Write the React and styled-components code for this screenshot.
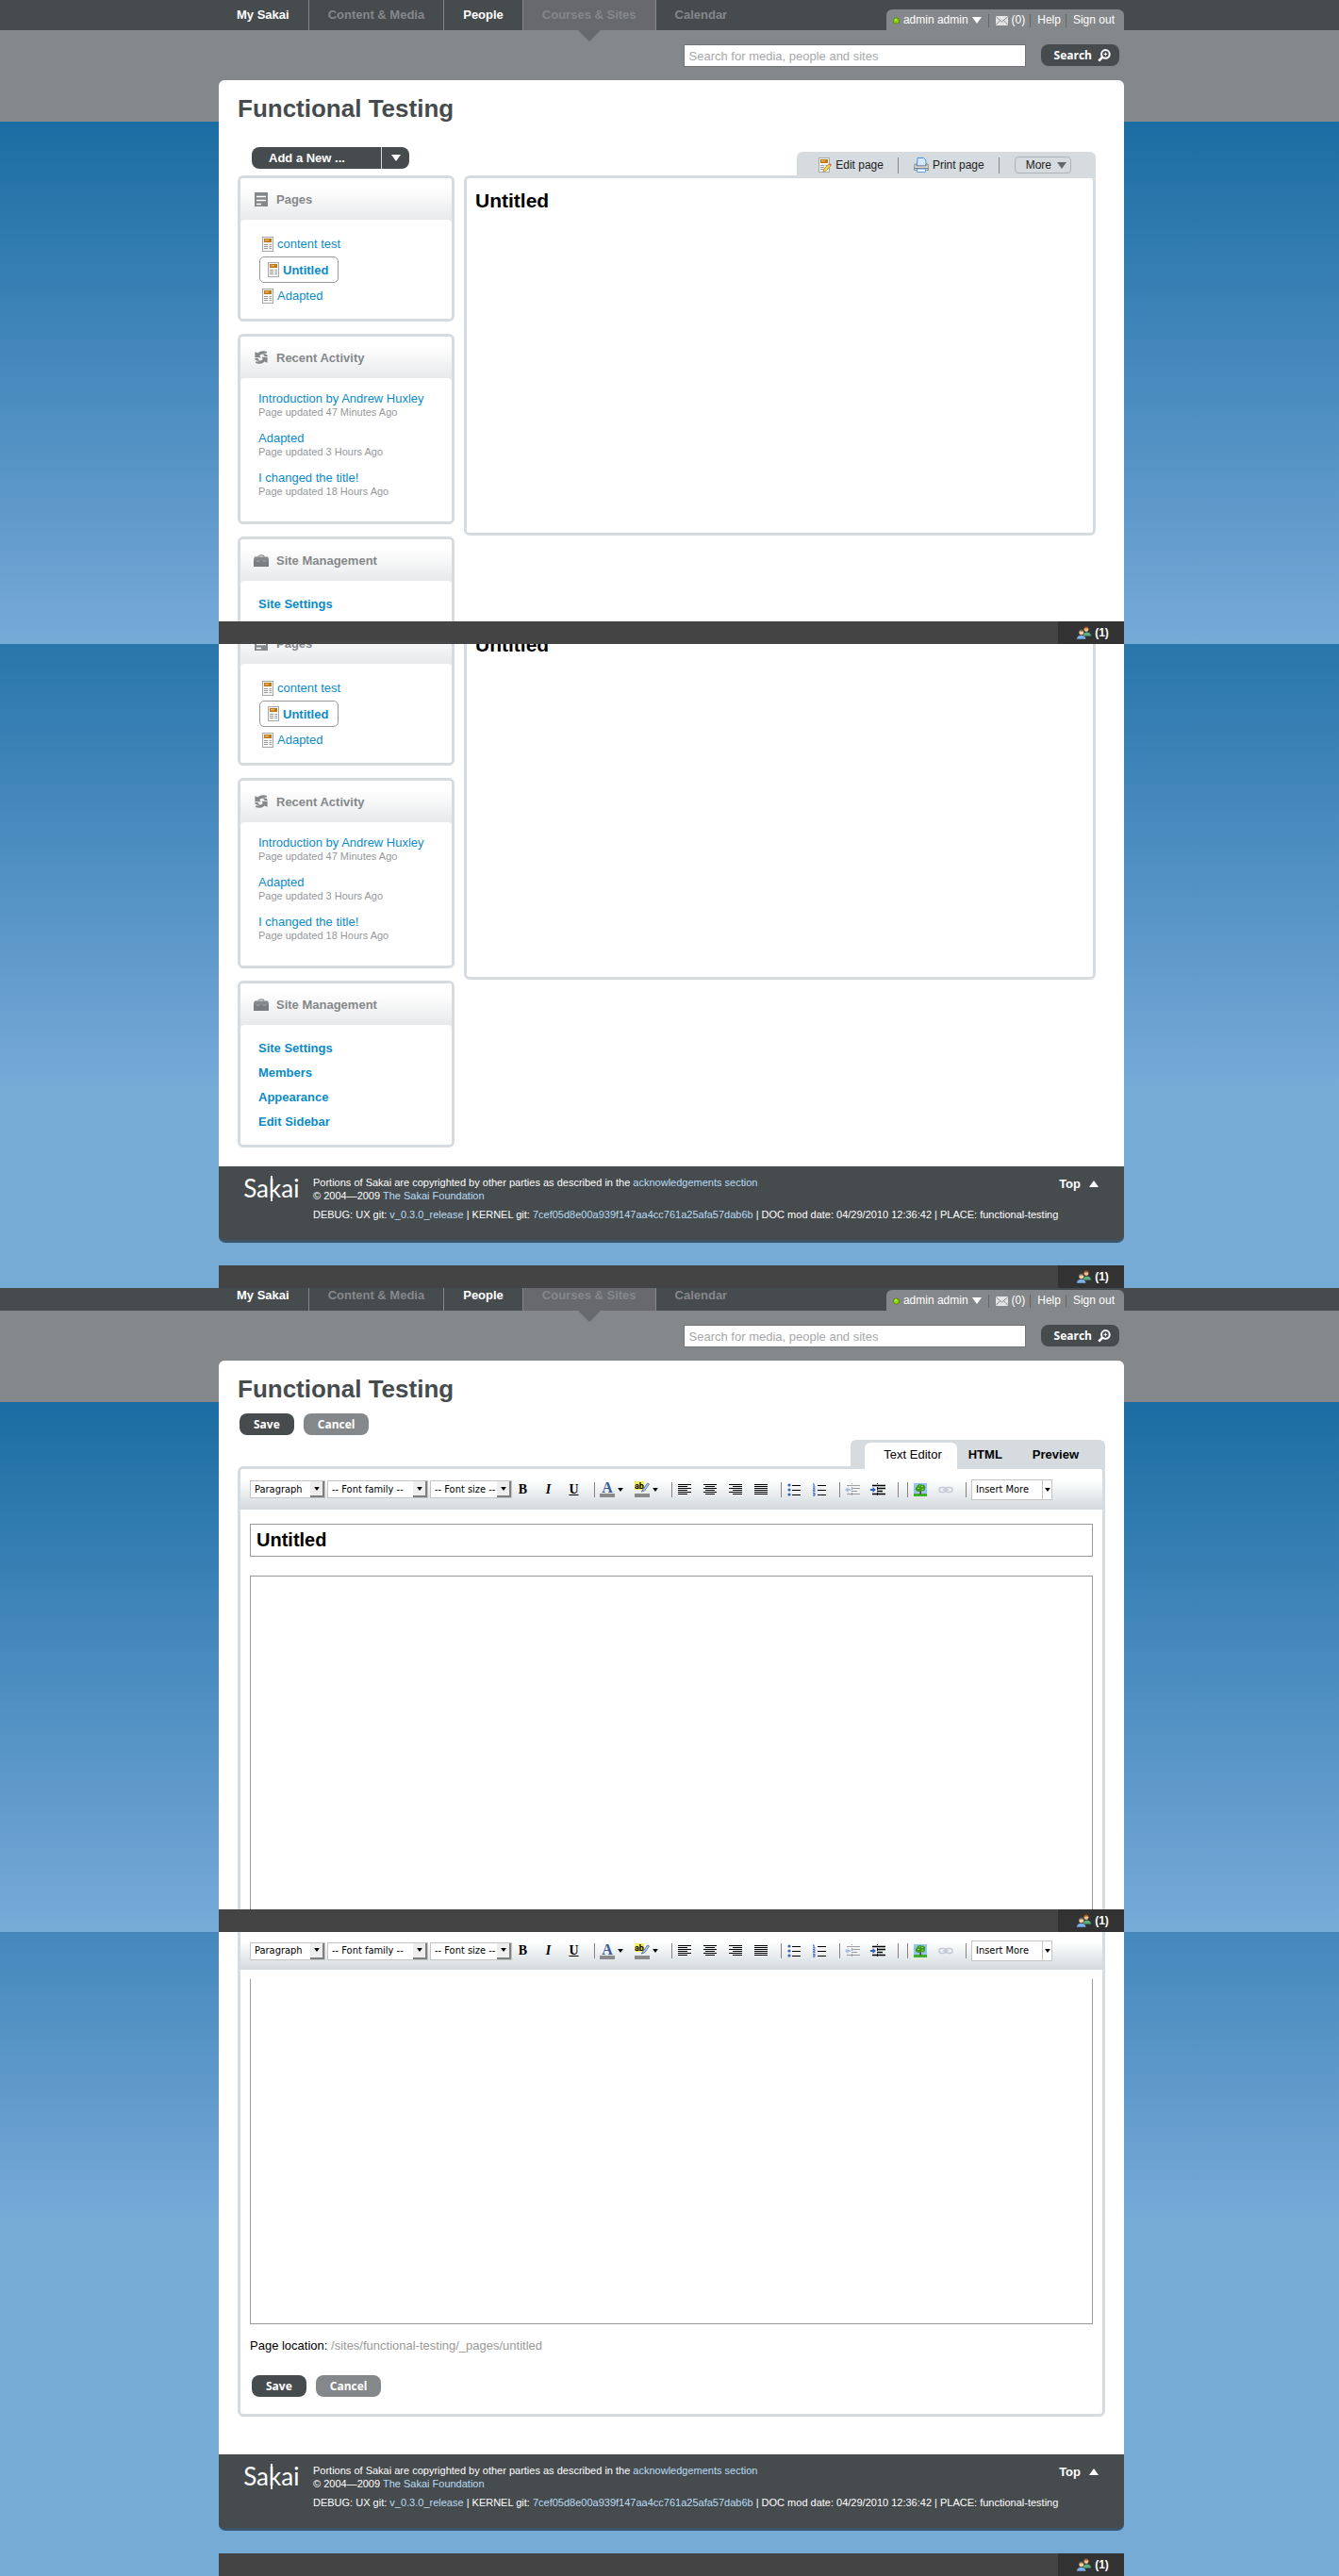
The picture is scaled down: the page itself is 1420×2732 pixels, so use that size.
import React, { useId } from "react";
import styled, { createGlobalStyle, css } from "styled-components";

const c = {
  ink: "#464b4e",
  grey: "#85888a",
  frame: "#d5dbdf",
  link: "#0b8ac6",
  muted: "#8a8c8e",
  field: "#999999",
};

const Global = createGlobalStyle`
  *, *::before, *::after { box-sizing: border-box; }
  body {
    margin: 0;
    background: #76abd6;
    font-family: "Liberation Sans", Arial, Helvetica, sans-serif;
    font-size: 13px;
    line-height: 15px;
    color: #000;
  }
  h1, h2, h3, p, ul { margin: 0; padding: 0; }
  ul { list-style: none; }
  a { text-decoration: none; color: ${c.link}; }
  button, input, select, textarea { font-family: inherit; margin: 0; border-radius: 0; }
  button { border: 0; padding: 0; background: none; cursor: pointer; }
  svg { display: block; flex: none; }
`;

/* ---------- page shell ---------- */

const Screen = styled.section`
  display: flex;
  flex-direction: column;
  min-height: 25vh;
  overflow: hidden;
  background:
    linear-gradient(${c.grey}, ${c.grey}) 0 ${(p) => -p.$scroll}px / 100% 129px no-repeat,
    linear-gradient(#1b6da3, #72a6d6 95%, #76abd6) 0 ${(p) => 129 - p.$scroll}px / 100% 554px no-repeat,
    #76abd6;
`;

const Scroller = styled.div`
  flex: 1;
  display: flex;
  flex-direction: column;
  margin-top: ${(p) => -(p.$clip || 0)}px;
`;

const Center = styled.div`
  width: 100%;
  max-width: 964px;
  margin: 0 auto;
  padding-left: 4px;
  ${(p) => p.$grow && css`
    flex: 1;
    display: flex;
    flex-direction: column;
  `}
`;

const Card = styled.main`
  flex: 1;
  display: flex;
  flex-direction: column;
  background: #fff;
  padding: ${(p) => (p.$top ? "15px 20px 0" : "0 20px")};
  border-radius: ${(p) => (p.$top ? "6px 6px 0 0" : "0")};
`;

/* ---------- header ---------- */

const NavBar = styled.header`
  background: ${c.ink};
`;

const NavRow = styled.div`
  display: flex;
  justify-content: space-between;
  align-items: flex-end;
`;

const NavList = styled.ul`
  display: flex;
`;

const NavItem = styled.li`
  position: relative;
  border-right: 1px solid ${(p) => (p.$last ? "transparent" : "#85888a")};
  background: ${(p) => (p.$current ? "#67696d" : "transparent")};
  &:first-child a { padding-left: 19px; }
  ${(p) => p.$current && css`
    &::after {
      content: "";
      position: absolute;
      top: 100%;
      left: 50%;
      margin-left: -12px;
      border: 12px solid transparent;
      border-top-color: #67696d;
      border-bottom-width: 0;
    }
  `}
`;

const NavLink = styled.a`
  display: block;
  padding: 0 20px;
  height: 32px;
  line-height: 31px;
  font-weight: bold;
  color: ${(p) => (p.$strong ? "#fff" : "#85888a")};
`;

const UserBar = styled.div`
  display: flex;
  align-items: center;
  height: 22px;
  padding: 1px 5px 0 0;
  background: ${c.grey};
  border-radius: 6px 6px 0 0;
`;

const UserItem = styled.a`
  display: flex;
  align-items: center;
  gap: 4px;
  height: 14px;
  padding: 0 5px 0 7px;
  font-size: 12px;
  color: #fff;
  border-left: 1px solid #64676a;
  &:first-child {
    border-left: 0;
    padding-right: 7px;
  }
`;

const SearchForm = styled.form`
  display: flex;
  justify-content: flex-end;
  align-items: flex-start;
  gap: 16px;
  height: 53px;
  padding: 15px 5px 0 0;
`;

const SearchField = styled.input`
  width: 363px;
  height: 24px;
  padding: 0 5px;
  border: 1px solid #717376;
  background: #fff;
  font-size: 13px;
  &::placeholder { color: #a6a8a9; opacity: 1; }
`;

const Pill = styled.button`
  display: flex;
  align-items: center;
  justify-content: center;
  gap: 6px;
  height: 23px;
  padding: ${(p) => (p.$slim ? "0 9px 0 14px" : "0 15px")};
  border-radius: 8px;
  background: ${(p) => (p.$light ? c.grey : c.ink)};
  color: #fff;
  font: bold 12px/22px "Open Sans", "Noto Sans", sans-serif;
`;

const PillRow = styled.div`
  display: flex;
  gap: 10px;
  align-self: ${(p) => (p.$upper ? "flex-start" : "auto")};
  padding: ${(p) => (p.$upper ? "11px 0 0 2px" : "0 0 0 2px")};
`;

/* ---------- site page ---------- */

const Title = styled.h1`
  font-size: 26px;
  line-height: 30px;
  color: ${c.ink};
`;

const ToolRow = styled.div`
  position: relative;
  z-index: 1;
  display: flex;
  justify-content: space-between;
  align-items: flex-end;
  height: ${(p) => (p.$tall ? 67 : 56)}px;
`;

const AddNew = styled.div`
  display: flex;
  height: 23px;
  margin: 0 0 7px 15px;
  border-radius: 8px;
  overflow: hidden;
  background: ${c.ink};
`;

const AddButton = styled.button`
  width: 138px;
  padding-left: 18px;
  text-align: left;
  color: #fff;
  font-size: 13px;
  line-height: 21px;
  font-weight: bold;
  border-right: 1px solid #d5dbdf;
`;

const AddMore = styled.button`
  display: flex;
  align-items: center;
  justify-content: center;
  width: 29px;
`;

const ActionBar = styled.div`
  display: flex;
  align-items: center;
  height: 28px;
  margin: 0 10px -3px 0;
  padding: 0 26px 0 23px;
  background: ${c.frame};
  border-radius: 6px 6px 0 0;
`;

const Action = styled.a`
  display: flex;
  align-items: center;
  gap: 4px;
  height: 17px;
  padding-right: 15px;
  margin-right: 16px;
  border-right: 1px solid ${c.grey};
  font-size: 12px;
  color: #222;
`;

const MoreButton = styled.button`
  display: flex;
  align-items: center;
  gap: 6px;
  height: 18px;
  padding: 0 4px 0 11px;
  border: 1px solid #aeb3b7;
  border-radius: 4px;
  font-size: 12px;
  line-height: 15px;
  color: #222;
`;

const Columns = styled.div`
  flex: 1;
  display: grid;
  grid-template-columns: 230px 1fr;
  gap: 10px;
  padding-right: 10px;
  padding-bottom: ${(p) => (p.$padded ? 20 : 0)}px;
`;

const Sidebar = styled.aside`
  display: flex;
  flex-direction: column;
  gap: 13px;
`;

const Panel = styled.section`
  border: 3px solid ${c.frame};
  border-radius: 6px;
  background: #fff;
  ${(p) => p.$open && css`
    flex: 1;
    border-bottom: 0;
    border-radius: 6px 6px 0 0;
  `}
`;

const PanelHead = styled.div`
  display: flex;
  align-items: center;
  gap: 8px;
  height: 48px;
  padding: 0 14px 4px;
  margin-bottom: -4px;
  border-radius: 3px 3px 0 0;
  background: linear-gradient(#fff 20%, #e8e9eb 92%);
`;

const PanelTitle = styled.h3`
  font-size: 13px;
  line-height: 15px;
  color: ${c.grey};
`;

const IconBox = styled.span`
  display: flex;
  justify-content: center;
  width: 16px;
`;

const PanelBody = styled.div`
  background: #fff;
  border-radius: 4px;
  padding: ${(p) => p.$pad};
`;

const PageLink = styled.a`
  display: flex;
  align-items: center;
  gap: 4px;
  width: fit-content;
  height: 27px;
  padding: 0 3px;
  ${(p) => p.$current && css`
    height: 28px;
    padding: 0 10px 0 8px;
    border: 1px solid #999;
    border-radius: 5px;
    font-weight: bold;
  `}
`;

const Activity = styled.li`
  & + & { margin-top: 13px; }
`;

const ActivityTime = styled.p`
  font-size: 11px;
  line-height: 14px;
  color: #95979a;
`;

const ManageLink = styled.a`
  display: block;
  line-height: 26px;
  font-weight: bold;
`;

const Content = styled.article`
  min-height: 382px;
  align-self: start;
  border: 3px solid ${c.frame};
  border-radius: 6px;
  padding: 12px 9px;
`;

const ContentTitle = styled.h2`
  font-size: 21px;
  line-height: 24px;
`;

/* ---------- editor ---------- */

const Tabs = styled.div`
  display: flex;
  align-items: flex-end;
  height: 31px;
  margin-bottom: -3px;
  padding: 0 8px 0 15px;
  background: ${c.frame};
  border-radius: 6px 6px 0 0;
`;

const Tab = styled.button`
  height: 28px;
  padding: 0 ${(p) => (p.$active ? 16 : 20)}px 4px;
  padding-left: ${(p) => (p.$active ? 20 : 12)}px;
  border-radius: 6px 6px 0 0;
  background: ${(p) => (p.$active ? "#fff" : "transparent")};
  font-size: 13px;
  line-height: 15px;
  font-weight: ${(p) => (p.$active ? "normal" : "bold")};
`;

const Editor = styled.section`
  display: flex;
  flex-direction: column;
  flex: ${(p) => (p.$part === "top" ? 1 : "none")};
  border: 3px solid ${c.frame};
  ${(p) => p.$part === "top"
    ? css`border-bottom: 0; border-radius: 6px 6px 0 0;`
    : css`border-top: 0; border-radius: 0 0 6px 6px;`}
`;

const Toolbar = styled.div`
  display: flex;
  align-items: center;
  height: ${(p) => (p.$pinned ? 40 : 43)}px;
  padding: 0 10px;
  border-radius: 3px 3px 0 0;
  background: linear-gradient(#fff 25%, #d2dadd);
`;

const Selects = styled.div`
  display: flex;
  gap: 2px;
`;

const Group = styled.div`
  display: flex;
  align-items: center;
  gap: 4px;
  height: 16px;
  margin-left: ${(p) => (p.$tight ? 8 : 10)}px;
  padding-left: ${(p) => (p.$roomy ? 5 : 1)}px;
  border-left: 1px solid #8d7f80;
  ${(p) => p.$first && css`
    margin-left: 0;
    padding-left: 0;
    border-left: 0;
  `}
`;

const Tool = styled.button`
  display: flex;
  align-items: center;
  justify-content: center;
  gap: 3px;
  width: ${(p) => (p.$wide ? 33 : 23)}px;
  height: 18px;
  color: #000;
  font: bold 14px/18px "Liberation Serif", "Times New Roman", serif;
  font-style: ${(p) => (p.$italic ? "italic" : "normal")};
  text-decoration: ${(p) => (p.$underline ? "underline" : "none")};
`;

const DropBox = styled.span`
  position: relative;
  display: flex;
  width: ${(p) => p.$w}px;
  height: ${(p) => (p.$flat ? 22 : 19)}px;
  border: 1px solid #c4c4c4;
  background: #fff;
`;

const DropSelect = styled.select`
  appearance: none;
  width: 100%;
  border: 0;
  padding: 0 0 0 4px;
  background: transparent;
  color: #000;
  font: 11px/16px "DejaVu Sans Condensed", Roboto, sans-serif;
`;

const DropArrow = styled.span`
  position: absolute;
  top: 0;
  right: 0;
  bottom: 0;
  display: flex;
  align-items: center;
  justify-content: center;
  pointer-events: none;
  ${(p) => p.$flat
    ? css`width: 10px; border-left: 1px solid #c4c4c4; background: #fff;`
    : css`
      width: 15px;
      background: #eee;
      border-right: 2px solid #808080;
      border-bottom: 2px solid #808080;
    `}
`;

const Fields = styled.div`
  flex: 1;
  display: flex;
  flex-direction: column;
  gap: 20px;
  padding: ${(p) => (p.$part === "top" ? "15px 10px 0" : "10px 10px 18px")};
`;

const TitleInput = styled.input`
  height: 35px;
  padding: 0 6px;
  border: 1px solid ${c.field};
  font-size: 20px;
  font-weight: bold;
`;

const Body = styled.textarea`
  display: block;
  width: 100%;
  padding: 6px;
  resize: none;
  outline: 0;
  border: 1px solid ${c.field};
  ${(p) => p.$part === "top"
    ? css`flex: 1; border-bottom: 0;`
    : css`height: 366px; border-top: 0;`}
`;

const Location = styled.p`
  margin: -5px 0 4px;
  span { color: #999; }
`;

/* ---------- footer and dock ---------- */

const Footer = styled.footer`
  display: grid;
  grid-template-columns: 74px minmax(0, 1fr) auto;
  min-height: 81px;
  padding: 10px 27px 20px 26px;
  margin-bottom: 24px;
  border-bottom: 3px solid #3c556a;
  border-radius: 0 0 7px 7px;
  background: ${c.ink};
  color: #fff;
`;

const Legal = styled.div`
  font-size: 11px;
  line-height: 14px;
  white-space: nowrap;
  a { color: #b9dcf5; }
  p + p { margin-top: 6px; }
`;

const TopLink = styled.a`
  display: flex;
  align-items: center;
  gap: 9px;
  height: 17px;
  font-weight: bold;
  color: #fff;
`;

const Dock = styled.div`
  display: flex;
  justify-content: flex-end;
  height: 24px;
  background: #444;
`;

const DockButton = styled.button`
  display: flex;
  align-items: center;
  justify-content: center;
  gap: 4px;
  width: 70px;
  padding-left: 4px;
  background: #323232;
  color: #fff;
  font-size: 12px;
  font-weight: bold;
`;

/* ---------- icons ---------- */

const Triangle = ({ up, fill = "#fff", w = 10, h = 7 }) => (
  <svg width={w} height={h} viewBox="0 0 10 7" aria-hidden="true">
    <path d={up ? "M0 7L5 0L10 7Z" : "M0 0H10L5 7Z"} fill={fill} />
  </svg>
);

const Dot = () => (
  <svg width="7" height="8" viewBox="0 0 7 8" aria-hidden="true">
    <circle cx="3.5" cy="4" r="3.1" fill="#8fd400" stroke="#4c7a10" strokeWidth="0.8" />
    <circle cx="2.8" cy="3" r="1" fill="#c4f25a" />
  </svg>
);

const Mail = () => (
  <svg width="13" height="10" viewBox="0 0 13 10" aria-hidden="true">
    <rect width="13" height="10" rx="1" fill="#e4e4e4" />
    <path d="M0.5 1L6.5 6L12.5 1M0.5 9L4.5 4.8M12.5 9L8.5 4.8" fill="none" stroke="#85888a" />
  </svg>
);

const Magnifier = () => (
  <svg width="14" height="14" viewBox="0 0 14 14" aria-hidden="true">
    <circle cx="8.4" cy="5.4" r="4.3" fill="none" stroke="#fff" strokeWidth="2" />
    <path d="M5.2 8.6L1.2 12.6" stroke="#fff" strokeWidth="2.6" />
    <path d="M8.4 3.6V7.2M6.6 5.4H10.2" stroke="#fff" strokeWidth="1" />
  </svg>
);

const PageIcon = ({ pencil }) => (
  <svg width={pencil ? 14 : 12} height="16" viewBox={pencil ? "0 0 14 16" : "0 0 12 16"} aria-hidden="true">
    <rect x="0.5" y="0.5" width="11" height="15" fill="#f4f4f2" stroke="#a9a9a9" />
    <rect x="2" y="2" width="8" height="4" fill="#c07a14" />
    <path d="M3 3.8H7" stroke="#f0c986" />
    <path d="M2 8.5H6M2 10.5H6M2 12.5H6M7.5 8.5H10M7.5 10.5H10M7.5 12.5H10" stroke="#9b9b9b" />
    {pencil && (
      <>
        <path d="M5 15L6 11.8L11 7L13 9L8 14Z" fill="#f1d64b" stroke="#a98a2a" strokeWidth="0.7" />
        <path d="M11 7L12 6L14 8L13 9Z" fill="#e0606a" />
      </>
    )}
  </svg>
);

const Printer = () => (
  <svg width="16" height="16" viewBox="0 0 16 16" aria-hidden="true">
    <path d="M4 0.5H10.5L13 3V9H3.5Z" fill="#d3e8fb" stroke="#4f8fd0" />
    <path d="M1 7H3V9H13V7H15L15.5 13.5H0.5Z" fill="#dcdcdc" stroke="#777" strokeWidth="0.8" />
    <path d="M1 11.5H15" stroke="#777" />
    <rect x="3.5" y="12" width="9" height="3.5" fill="#eaf4fd" stroke="#4f8fd0" strokeWidth="0.8" />
  </svg>
);

const PagesGlyph = () => (
  <svg width="14" height="15" viewBox="0 0 14 15" aria-hidden="true">
    <rect width="14" height="15" fill={c.grey} />
    <path d="M2 4.5H12M2 8.5H12M2 12.5H7" stroke="#fff" strokeWidth="1.4" />
  </svg>
);

const RefreshGlyph = () => (
  <svg width="14" height="14" viewBox="0 0 14 14" aria-hidden="true">
    <g fill={c.grey}>
      <path d="M13 1C9.5 -0.4 5.6 0.4 3.6 2.6L0.4 1.2V7.2H6.6L5.2 5C7.4 3 10 2.6 13 2.4Z" />
      <path d="M1 13C4.5 14.4 8.4 13.6 10.4 11.4L13.6 12.8V6.8H7.4L8.8 9C6.6 11 4 11.4 1 11.6Z" />
      <path d="M0.2 8H3.4C4 9.4 4.8 10 6.4 10.2C3.4 11.4 0.4 10.6 0.2 8Z" />
      <path d="M13.8 6H10.6C10 4.6 9.2 4 7.6 3.8C10.6 2.6 13.6 3.4 13.8 6Z" />
    </g>
  </svg>
);

const CaseGlyph = () => (
  <svg width="16" height="13" viewBox="0 0 16 13" aria-hidden="true">
    <path d="M5 2.4C5 0.4 11 0.4 11 2.4" fill="none" stroke={c.grey} strokeWidth="1.3" />
    <path d="M1 2.5H15L16 5V7H0V5Z" fill={c.grey} />
    <path d="M0 7H16V13H0Z" fill="#7b7e80" />
    <path d="M3 7.2H6M10 7.2H13" stroke="#b4b6b8" strokeWidth="0.8" />
  </svg>
);

const People = () => (
  <svg width="15" height="14" viewBox="0 0 15 14" aria-hidden="true">
    <path d="M7 10C7 7.5 8.5 6.6 10.5 6.6S14.8 7.6 15 10.4H7Z" fill="#58b17a" />
    <circle cx="10" cy="3.6" r="2.4" fill="#f2c08d" />
    <path d="M7.4 4.4C7 1.4 8.4 0.4 10 0.4S12.8 1.6 12.6 4.6L11.8 2.6H8.6Z" fill="#a8592a" />
    <path d="M0 13.8C0 11 2 9.8 4.6 9.8S9.4 11 9.4 13.8Z" fill="#78b0ea" />
    <circle cx="4.8" cy="6.8" r="2.5" fill="#f6cda2" />
    <path d="M2.2 7C2 4.2 3.4 3.4 4.8 3.4S7.6 4.4 7.4 7L6.6 5.6H3Z" fill="#6d6358" />
  </svg>
);

const LINES = {
  left: [[0, 14], [0, 10], [0, 14], [0, 10], [0, 14], [0, 10]],
  center: [[0, 14], [2, 12], [0, 14], [2, 12], [0, 14], [2, 12]],
  right: [[0, 14], [4, 14], [0, 14], [4, 14], [0, 14], [4, 14]],
  justify: [[0, 14], [0, 14], [0, 14], [0, 14], [0, 14], [0, 14]],
};

const Align = ({ kind }) => (
  <svg width="14" height="12" viewBox="0 0 14 12" shapeRendering="crispEdges" aria-hidden="true">
    {LINES[kind].map(([a, b], i) => (
      <path key={i} d={`M${a} ${i * 2 + 0.5}H${b}`} stroke="#000" />
    ))}
  </svg>
);

const Bullets = () => (
  <svg width="14" height="14" viewBox="0 0 14 14" aria-hidden="true">
    {[2, 7, 12].map((y) => (
      <g key={y}>
        <circle cx="2" cy={y} r="1.6" fill="#3f64b0" />
        <path d={`M5 ${y + 0.5}H14`} stroke="#000" />
      </g>
    ))}
  </svg>
);

const Numbers = () => (
  <svg width="15" height="14" viewBox="0 0 15 14" aria-hidden="true">
    {[2, 7, 12].map((y) => <path key={y} d={`M6 ${y + 0.5}H15`} stroke="#000" />)}
    <path d="M1 1H2.2V3.6M1 4H3.6M1 5.6H3V7.2H1.4V8.4H3.6M1 10.2H3V13.2H1M1.4 11.7H3" fill="none" stroke="#3f64b0" />
  </svg>
);

const Indent = ({ back }) => (
  <svg width="16" height="14" viewBox="0 0 16 14" opacity={back ? 0.35 : 1} aria-hidden="true">
    <path d="M2 2.5H16M7 5.5H16M7 8.5H13M2 11.5H16" stroke="#000" strokeWidth={back ? 1.2 : 1.6} />
    <path d="M7.5 0V14" stroke="#000" strokeDasharray="1 1" />
    <path d={back ? "M0 7L3.5 4V6H6V8H3.5V10Z" : "M6 7L2.5 4V6H0V8H2.5V10Z"} fill="#2f5fc4" />
  </svg>
);

const Tree = () => (
  <svg width="14" height="14" viewBox="0 0 14 14" aria-hidden="true">
    <rect width="14" height="14" fill="#8fc6f4" />
    <rect y="11" width="14" height="3" fill="#3fae2a" />
    <path d="M7.2 5V12" stroke="#6b4416" strokeWidth="1.6" />
    <path d="M2 7C1 5 3 4 3.4 3.4C4 1 7 0.4 8.6 1.6C11 1.2 13 3.4 12 5.4C12.6 8 9.6 9 8 8C6 9.4 3 9.2 2 7Z" fill="#3f9a1c" />
    <path d="M4 5.4H6M8 3.4H10M8.6 6.4H10.4M6 2.8H7" stroke="#a8dc4a" />
  </svg>
);

const Chain = () => (
  <svg width="16" height="8" viewBox="0 0 16 8" aria-hidden="true">
    <g fill="none" stroke="#c3cad6" strokeWidth="1.5">
      <rect x="1" y="1.4" width="7" height="5" rx="2.5" />
      <rect x="8" y="1.4" width="7" height="5" rx="2.5" />
      <path d="M5 4H11" />
    </g>
  </svg>
);

const ForeColor = () => (
  <svg width="16" height="17" viewBox="0 0 16 17" aria-hidden="true">
    <text x="8" y="12" textAnchor="middle" fontFamily="Liberation Serif, serif" fontWeight="bold" fontSize="16" fill="#3c5a9a">A</text>
    <rect y="13" width="16" height="4" fill="#8a8a8a" />
  </svg>
);

const Highlight = () => (
  <svg width="16" height="17" viewBox="0 0 16 17" aria-hidden="true">
    <rect width="10" height="9" fill="#f4ef58" />
    <path d="M8 10L13.5 2L15.5 3L10.5 10L7 11Z" fill="#b9cdec" stroke="#4a648f" strokeWidth="0.8" />
    <text x="0" y="8" fontFamily="Roboto, sans-serif" fontSize="9" fill="#000">ab</text>
    <rect y="13" width="16" height="4" fill="#8a8a8a" />
  </svg>
);

const Logo = () => (
  <svg width="64" height="32" viewBox="0 0 64 32" overflow="visible" role="img" aria-label="Sakai">
    <g fontFamily="Lato, sans-serif" fontSize="26" fill="#fff">
      <text x="27" y="23" textAnchor="end">Sa</text>
      <text x="27" y="23">kai</text>
    </g>
    <path d="M30 0V27" stroke="#fff" strokeWidth="1.8" />
  </svg>
);

/* ---------- composed parts ---------- */

const NAV = [
  { label: "My Sakai", strong: true },
  { label: "Content & Media" },
  { label: "People", strong: true },
  { label: "Courses & Sites", current: true },
  { label: "Calendar" },
];

function Header() {
  return (
    <>
      <NavBar>
        <Center>
          <NavRow>
            <nav>
              <NavList>
                {NAV.map((n, i) => (
                  <NavItem key={n.label} $current={n.current} $last={i === NAV.length - 1}>
                    <NavLink href="#" $strong={n.strong}>{n.label}</NavLink>
                  </NavItem>
                ))}
              </NavList>
            </nav>
            <UserBar>
              <UserItem href="#">
                <Dot />admin admin<Triangle />
              </UserItem>
              <UserItem href="#"><Mail />(0)</UserItem>
              <UserItem href="#">Help</UserItem>
              <UserItem href="#">Sign out</UserItem>
            </UserBar>
          </NavRow>
        </Center>
      </NavBar>
      <Center>
        <SearchForm onSubmit={(e) => e.preventDefault()}>
          <SearchField type="text" placeholder="Search for media, people and sites" aria-label="Search for media, people and sites" />
          <Pill type="submit" $slim>Search<Magnifier /></Pill>
        </SearchForm>
      </Center>
    </>
  );
}

const PAGES = ["content test", "Untitled", "Adapted"];
const ACTIVITY = [
  ["Introduction by Andrew Huxley", "Page updated 47 Minutes Ago"],
  ["Adapted", "Page updated 3 Hours Ago"],
  ["I changed the title!", "Page updated 18 Hours Ago"],
];

function SidePanel({ icon, title, pad, open, children }) {
  return (
    <Panel $open={open}>
      <PanelHead>
        <IconBox>{icon}</IconBox>
        <PanelTitle>{title}</PanelTitle>
      </PanelHead>
      <PanelBody $pad={pad}>{children}</PanelBody>
    </Panel>
  );
}

function SiteColumns({ manage, open }) {
  return (
    <Columns $padded={!open}>
      <Sidebar>
        <SidePanel icon={<PagesGlyph />} title="Pages" pad="12px 20px 11px">
          {PAGES.map((p) => (
            <PageLink key={p} href="#" $current={p === "Untitled"}><PageIcon />{p}</PageLink>
          ))}
        </SidePanel>
        <SidePanel icon={<RefreshGlyph />} title="Recent Activity" pad="14px 19px 25px">
          <ul>
            {ACTIVITY.map(([name, time]) => (
              <Activity key={name}>
                <a href="#">{name}</a>
                <ActivityTime>{time}</ActivityTime>
              </Activity>
            ))}
          </ul>
        </SidePanel>
        <SidePanel icon={<CaseGlyph />} title="Site Management" pad={open ? "12px 19px 5px" : "12px 19px 11px"} open={open}>
          {manage.map((m) => <ManageLink key={m} href="#">{m}</ManageLink>)}
        </SidePanel>
      </Sidebar>
      <Content>
        <ContentTitle>Untitled</ContentTitle>
      </Content>
    </Columns>
  );
}

function Drop({ label, w, flat }) {
  const id = useId();
  return (
    <DropBox $w={w} $flat={flat}>
      <DropSelect id={id} aria-label={label}><option>{label}</option></DropSelect>
      <DropArrow $flat={flat}><Triangle fill="#000" w={6} h={4} /></DropArrow>
    </DropBox>
  );
}

function EditorTools({ pinned }) {
  return (
    <Toolbar $pinned={pinned} role="toolbar">
      <Selects>
        <Drop label="Paragraph" w={80} />
        <Drop label="-- Font family --" w={107} />
        <Drop label="-- Font size --" w={87} />
      </Selects>
      <Group $first>
        <Tool>B</Tool>
        <Tool $italic>I</Tool>
        <Tool $underline>U</Tool>
      </Group>
      <Group>
        <Tool $wide aria-label="Text color"><ForeColor /><Triangle fill="#000" w={6} h={4} /></Tool>
        <Tool $wide aria-label="Highlight"><Highlight /><Triangle fill="#000" w={6} h={4} /></Tool>
      </Group>
      <Group>
        {Object.keys(LINES).map((k) => <Tool key={k} aria-label={`Align ${k}`}><Align kind={k} /></Tool>)}
      </Group>
      <Group>
        <Tool aria-label="Bulleted list"><Bullets /></Tool>
        <Tool aria-label="Numbered list"><Numbers /></Tool>
      </Group>
      <Group>
        <Tool aria-label="Outdent"><Indent back /></Tool>
        <Tool aria-label="Indent"><Indent /></Tool>
      </Group>
      <Group />
      <Group $tight>
        <Tool aria-label="Insert image"><Tree /></Tool>
        <Tool aria-label="Insert link"><Chain /></Tool>
      </Group>
      <Group $roomy>
        <Drop label="Insert More" w={86} flat />
      </Group>
    </Toolbar>
  );
}

const SaveCancel = ({ upper }) => (
  <PillRow $upper={upper}>
    <Pill type="button">Save</Pill>
    <Pill type="button" $light>Cancel</Pill>
  </PillRow>
);

const PageFooter = () => (
  <Footer>
    <Logo />
    <Legal>
      <p>
        Portions of Sakai are copyrighted by other parties as described in the <a href="#">acknowledgements section</a>
        <br />
        © 2004—2009 <a href="#">The Sakai Foundation</a>
      </p>
      <p>
        DEBUG: UX git: <a href="#">v_0.3.0_release</a> | KERNEL git: <a href="#">7cef05d8e00a939f147aa4cc761a25afa57dab6b</a> | DOC mod date: 04/29/2010 12:36:42 | PLACE: functional-testing
      </p>
    </Legal>
    <TopLink href="#">Top<Triangle up /></TopLink>
  </Footer>
);

const ChatDock = () => (
  <Center>
    <Dock>
      <DockButton type="button"><People />(1)</DockButton>
    </Dock>
  </Center>
);

export default function App() {
  return (
    <>
      <Global />

      <Screen $scroll={0}>
        <Scroller>
          <Header />
          <Center $grow>
            <Card $top>
              <Title>Functional Testing</Title>
              <ToolRow>
                <AddNew>
                  <AddButton type="button">Add a New ...</AddButton>
                  <AddMore type="button" aria-label="More types"><Triangle /></AddMore>
                </AddNew>
                <ActionBar>
                  <Action href="#"><PageIcon pencil />Edit page</Action>
                  <Action href="#"><Printer />Print page</Action>
                  <MoreButton type="button">More<Triangle fill="#64676a" /></MoreButton>
                </ActionBar>
              </ToolRow>
              <SiteColumns manage={["Site Settings"]} open />
            </Card>
          </Center>
        </Scroller>
        <ChatDock />
      </Screen>

      <Screen $scroll={212}>
        <Scroller $clip={26}>
          <Center $grow>
            <Card>
              <SiteColumns manage={["Site Settings", "Members", "Appearance", "Edit Sidebar"]} />
            </Card>
            <PageFooter />
          </Center>
        </Scroller>
        <ChatDock />
      </Screen>

      <Screen $scroll={8}>
        <Scroller $clip={8}>
          <Header />
          <Center $grow>
            <Card $top>
              <Title>Functional Testing</Title>
              <ToolRow $tall>
                <SaveCancel upper />
                <Tabs>
                  <Tab type="button" $active>Text Editor</Tab>
                  <Tab type="button">HTML</Tab>
                  <Tab type="button">Preview</Tab>
                </Tabs>
              </ToolRow>
              <Editor $part="top">
                <EditorTools />
                <Fields $part="top">
                  <TitleInput type="text" defaultValue="Untitled" aria-label="Page title" />
                  <Body $part="top" aria-label="Page content" />
                </Fields>
              </Editor>
            </Card>
          </Center>
        </Scroller>
        <ChatDock />
      </Screen>

      <Screen $scroll={377}>
        <Scroller>
          <Center $grow>
            <Card>
              <Editor $part="bottom">
                <EditorTools pinned />
                <Fields $part="bottom">
                  <Body $part="bottom" aria-label="Page content, continued" />
                  <Location>Page location: <span>/sites/functional-testing/_pages/untitled</span></Location>
                  <SaveCancel />
                </Fields>
              </Editor>
            </Card>
            <PageFooter />
          </Center>
        </Scroller>
        <ChatDock />
      </Screen>
    </>
  );
}
